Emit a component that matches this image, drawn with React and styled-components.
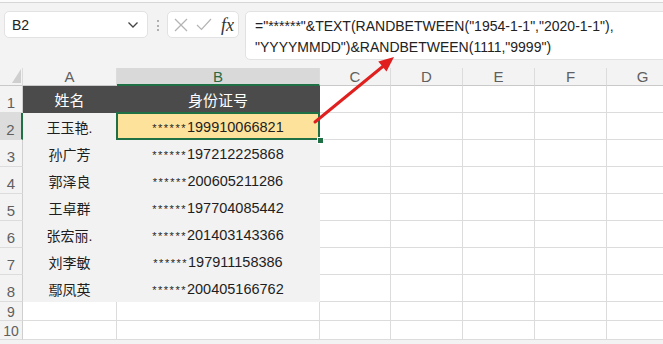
import React from "react";
import styled, { createGlobalStyle, css } from "styled-components";

const GlobalStyle = createGlobalStyle`
  html, body {
    margin: 0;
    padding: 0;
    background: #f3f3f3;
  }
  body {
    font-family: "Liberation Sans", "Noto Sans CJK SC", sans-serif;
  }
`;

const columns = ["A", "B", "C", "D", "E", "F", "G"];
const colWidths = [23, 94, 203, 71, 72, 72, 72, 72];

const people = [
  ["王玉艳.", "199910066821"],
  ["孙广芳", "197212225868"],
  ["郭泽良", "200605211286"],
  ["王卓群", "197704085442"],
  ["张宏丽.", "201403143366"],
  ["刘李敏", "197911158386"],
  ["鄢凤英", "200405166762"],
];

const App = () => {
  return (
    <Page>
      <GlobalStyle />
      <TopStrip />
      <Toolbar>
        <NameBox>
          <NameText>B2</NameText>
          <svg width="12" height="8" viewBox="0 0 12 8">
            <polyline points="1.5,1.5 6,6 10.5,1.5" fill="none" stroke="#444" strokeWidth="1.3" />
          </svg>
        </NameBox>
        <Dots>
          <Dot />
          <Dot />
          <Dot />
        </Dots>
        <FxButtons>
          <svg width="14" height="14" viewBox="0 0 14 14">
            <line x1="1" y1="1" x2="13" y2="13" stroke="#b4b4b4" strokeWidth="1.2" />
            <line x1="13" y1="1" x2="1" y2="13" stroke="#b4b4b4" strokeWidth="1.2" />
          </svg>
          <svg width="16" height="13" viewBox="0 0 16 13">
            <polyline points="1,7 5.5,11.5 15,1" fill="none" stroke="#b4b4b4" strokeWidth="1.2" />
          </svg>
          <FxLabel>fx</FxLabel>
        </FxButtons>
        <FormulaBox>
          <FormulaLine>="******"&amp;TEXT(RANDBETWEEN("1954-1-1","2020-1-1"),</FormulaLine>
          <FormulaLine>"YYYYMMDD")&amp;RANDBETWEEN(1111,"9999")</FormulaLine>
        </FormulaBox>
      </Toolbar>

      <Sheet>
        <Corner>
          <svg width="9" height="14" viewBox="0 0 9 14">
            <polygon points="9,0 9,14 0,14" fill="#cfcfcf" />
          </svg>
        </Corner>
        {columns.map((c) => (
          <ColHead key={c} $active={c === "B"}>
            {c}
          </ColHead>
        ))}

        <RowHead>1</RowHead>
        <Cell $kind="head">姓名</Cell>
        <Cell $kind="head">身份证号</Cell>
        {columns.slice(2).map((c) => (
          <Cell key={c} />
        ))}

        {people.map(([name, id], i) => (
          <React.Fragment key={id}>
            <RowHead $active={i === 0}>{i + 2}</RowHead>
            <Cell $kind="fill">{name}</Cell>
            <Cell $kind={i === 0 ? "sel" : "fill"} $digits>
              <Stars>******</Stars>
              {id}
              {i === 0 && <Handle />}
            </Cell>
            {columns.slice(2).map((c) => (
              <Cell key={c} />
            ))}
          </React.Fragment>
        ))}

        {[9, 10].map((n) => (
          <React.Fragment key={n}>
            <RowHead $small>{n}</RowHead>
            {columns.map((c) => (
              <Cell key={c} />
            ))}
          </React.Fragment>
        ))}
      </Sheet>

      <Overlay width="663" height="344" viewBox="0 0 663 344">
        <line x1="315" y1="122" x2="384" y2="65.5" stroke="#e0201e" strokeWidth="3" strokeLinecap="round" />
        <polygon points="394,57 386.5,71.5 378.3,61.5" fill="#e0201e" />
      </Overlay>
    </Page>
  );
};

const Page = styled.div`
  position: relative;
  width: 663px;
  height: 344px;
  overflow: hidden;
  background: #f3f3f3;
`;

const TopStrip = styled.div`
  height: 2px;
  background: #fbfbfb;
  border-bottom: 1px solid #d6d6d6;
`;

const Toolbar = styled.div`
  display: flex;
  align-items: flex-start;
  padding: 8px 0 8px 4px;
  height: 49px;
`;

const Box = styled.div`
  box-sizing: border-box;
  background: #ffffff;
  border: 1px solid #e2e2e2;
  border-radius: 5px;
`;

const NameBox = styled(Box)`
  display: flex;
  align-items: center;
  justify-content: space-between;
  width: 144px;
  height: 27px;
  padding: 0 8px 0 7px;
`;

const NameText = styled.span`
  font-size: 14px;
  color: #222;
`;

const Dots = styled.div`
  display: flex;
  flex-direction: column;
  gap: 2.5px;
  margin: 9px 8px 0 9px;
`;

const Dot = styled.span`
  width: 2px;
  height: 2px;
  border-radius: 50%;
  background: #9a9a9a;
`;

const FxButtons = styled(Box)`
  display: flex;
  align-items: center;
  gap: 8px;
  width: 72px;
  height: 27px;
  padding: 0 0 0 6px;
`;

const FxLabel = styled.span`
  font-family: "Liberation Serif", serif;
  font-style: italic;
  font-size: 18px;
  color: #333;
  margin-left: 1px;
  line-height: 1;
`;

const FormulaBox = styled(Box)`
  display: flex;
  flex-direction: column;
  justify-content: center;
  gap: 5px;
  flex: 1;
  height: 49px;
  margin-left: 6px;
  margin-right: -20px;
  padding: 2px 0 0 9px;
`;

const FormulaLine = styled.div`
  font-size: 14px;
  line-height: 16px;
  color: #222;
  white-space: nowrap;
`;

const Sheet = styled.div`
  display: grid;
  grid-template-columns: ${colWidths.map((w) => `${w}px`).join(" ")};
  grid-template-rows: 18px repeat(8, 27px) 19px 19px;
  background: #ffffff;
`;

const Corner = styled.div`
  box-sizing: border-box;
  display: flex;
  align-items: flex-end;
  justify-content: flex-end;
  padding: 0 1px 2px 0;
  background: #f3f3f3;
  border-right: 1px solid #dcdcdc;
  border-bottom: 1px solid #c9c9c9;
`;

const ColHead = styled.div`
  box-sizing: border-box;
  display: flex;
  align-items: center;
  justify-content: center;
  font-size: 15px;
  color: #5f5f5f;
  background: #f3f3f3;
  border-right: 1px solid #dcdcdc;
  border-bottom: 1px solid #c9c9c9;
  ${(p) =>
    p.$active &&
    css`
      background: #d9d9d9;
      color: #2a6b46;
      border-bottom: 2px solid #1f7145;
    `}
`;

const RowHead = styled.div`
  box-sizing: border-box;
  display: flex;
  align-items: flex-end;
  justify-content: center;
  padding-bottom: ${(p) => (p.$small ? 0 : 1)}px;
  font-size: ${(p) => (p.$small ? 14 : 15)}px;
  color: #5f5f5f;
  background: #f3f3f3;
  border-right: 1px solid #cfcfcf;
  border-bottom: 1px solid #dcdcdc;
  ${(p) =>
    p.$active &&
    css`
      background: #dcdcdc;
      border-right: 2px solid #1f7145;
    `}
`;

const cellKinds = {
  head: css`
    background: #4b4b4b;
    border-color: #4b4b4b;
    color: #ffffff;
    font-size: 15px;
  `,
  fill: css`
    background: #f2f2f2;
    border-color: #f2f2f2;
  `,
  sel: css`
    position: relative;
    background: #fde29c;
    border-color: #fde29c;
    &::after {
      content: "";
      position: absolute;
      inset: -1px;
      border: 2px solid #1f7145;
    }
  `,
};

const Cell = styled.div`
  box-sizing: border-box;
  display: flex;
  align-items: center;
  justify-content: center;
  padding-top: 1px;
  font-size: ${(p) => (p.$digits ? 14.5 : 14)}px;
  color: #1e1e1e;
  white-space: nowrap;
  border-right: 1px solid #dcdcdc;
  border-bottom: 1px solid #dcdcdc;
  ${(p) => cellKinds[p.$kind]}
`;

const Stars = styled.span`
  font-size: 11px;
  letter-spacing: 1.5px;
  position: relative;
  top: 1px;
`;

const Handle = styled.span`
  position: absolute;
  right: -5px;
  bottom: -5px;
  width: 5px;
  height: 5px;
  background: #1f7145;
  border: 1px solid #ffffff;
  z-index: 1;
`;

const Overlay = styled.svg`
  position: absolute;
  left: 0;
  top: 0;
  pointer-events: none;
`;

export default App;
